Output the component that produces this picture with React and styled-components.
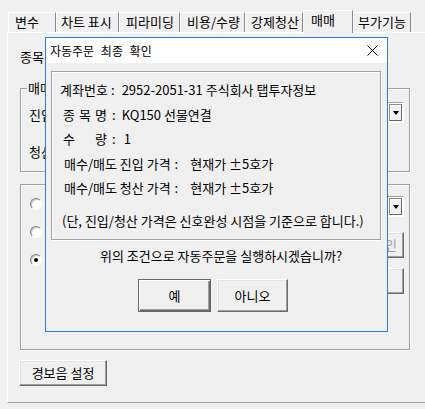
import React from "react"
import styled, { createGlobalStyle, css } from "styled-components"

const GlobalStyle = createGlobalStyle`
    html, body {
        margin: 0;
        padding: 0;
        background: #f0f0f0;
    }
    body {
        font-family: "Noto Sans CJK KR", "Noto Sans", sans-serif;
        font-size: 13px;
        color: #000;
    }
`

const Screen = styled.div`
    position: relative;
    width: 425px;
    height: 409px;
    overflow: hidden;
    padding-top: 10px;
    box-sizing: border-box;
`

const TabRow = styled.div`
    display: flex;
    align-items: flex-end;
    height: 22px;
    padding-left: 8px;
    position: relative;
    z-index: 1;
`

const Tab = styled.div`
    box-sizing: border-box;
    width: ${(p) => p.$w}px;
    height: ${(p) => (p.$active ? 23 : 20)}px;
    margin-bottom: ${(p) => (p.$active ? -1 : 0)}px;
    padding: 1px 0 0 ${(p) => p.$pad}px;
    line-height: 16px;
    background: #f0f0f0;
    border-top: 1px solid #fff;
    border-left: 1px solid #fff;
    border-right: 1px solid #8a8a8a;
    white-space: nowrap;
`

const Panel = styled.div`
    box-sizing: border-box;
    width: 420px;
    height: 371px;
    margin-left: 7px;
    padding-left: 12px;
    border: 1px solid;
    border-color: #fff #a0a0a0 #a0a0a0 #fff;
    display: flex;
    flex-direction: column;
`

const FieldLabel = styled.div`
    line-height: 16px;
    margin-top: 16px;
`

const Group = styled.div`
    position: relative;
    box-sizing: border-box;
    width: 390px;
    height: ${(p) => p.$h}px;
    margin-top: ${(p) => p.$mt}px;
    border: 1px solid #a0a0a0;
    box-shadow: inset 1px 1px #fff, 1px 1px #fff;
    padding: ${(p) => p.$pad};
`

const Legend = styled.span`
    position: absolute;
    top: -9px;
    left: 6px;
    padding: 0 1px;
    background: #f0f0f0;
    line-height: 16px;
`

const Row = styled.div`
    display: flex;
    align-items: center;
    justify-content: space-between;
    margin-top: ${(p) => p.$mt || 0}px;
    line-height: 16px;
`

const RowLabel = styled.span`
    padding-top: ${(p) => p.$shift || 0}px;
`

const Combo = styled.div`
    display: flex;
    box-sizing: border-box;
    width: ${(p) => p.$w}px;
    height: ${(p) => p.$h}px;
    border: 1px solid;
    border-color: #a0a0a0 #fff #fff #a0a0a0;
    background: #fff;
    padding: 1px;
`

const ComboField = styled.div`
    flex: 1;
`

const ComboArrow = styled.div`
    width: 13px;
    box-sizing: border-box;
    border: 1px solid;
    border-color: #8a8a8a #696969 #696969 #8a8a8a;
    box-shadow: inset 1px 1px #fff;
    background: #f0f0f0;
    display: flex;
    align-items: center;
    justify-content: center;
    &::after {
        content: "";
        border-left: 3.5px solid transparent;
        border-right: 3.5px solid transparent;
        border-top: 4px solid #000;
    }
`

const Columns = styled.div`
    display: flex;
    justify-content: space-between;
`

const RadioColumn = styled.div`
    display: flex;
    flex-direction: column;
    gap: 16px;
    padding-top: 13px;
`

const Radio = styled.span`
    position: relative;
    display: block;
    width: 12px;
    height: 12px;
    box-sizing: border-box;
    border-radius: 50%;
    border: 1px solid;
    border-color: #808080 #fff #fff #808080;
    background: #fff;
    box-shadow: inset 1px 1px #c8c8c8;
    ${(p) =>
        p.$checked &&
        css`
            &::after {
                content: "";
                position: absolute;
                left: 3px;
                top: 3px;
                width: 4px;
                height: 4px;
                border-radius: 50%;
                background: #000;
            }
        `}
`

const ControlColumn = styled.div`
    display: flex;
    flex-direction: column;
    align-items: flex-end;
    padding-top: 11px;
`

const Button = styled.button`
    box-sizing: border-box;
    width: ${(p) => p.$w}px;
    height: ${(p) => p.$h}px;
    margin-top: ${(p) => p.$mt || 0}px;
    padding: 0;
    font: inherit;
    line-height: 16px;
    color: ${(p) => (p.disabled ? "#a0a0a0" : "#000")};
    background: #f0f0f0;
    border: 1px solid;
    border-color: #fff #696969 #696969 #fff;
    box-shadow: inset -1px -1px #a0a0a0, inset 1px 1px #e3e3e3;
    ${(p) =>
        p.$default &&
        css`
            border-color: #696969;
            box-shadow: inset 1px 1px #fff, inset -1px -1px #696969, inset -2px -2px #a0a0a0;
        `}
`

const AlarmButton = styled(Button)`
    margin-left: -1px;
    margin-top: 10px;
`

/* confirm dialog floating over the tab page */
const Dialog = styled.div`
    position: absolute;
    left: 45px;
    top: 37px;
    width: 343px;
    height: 295px;
    box-sizing: border-box;
    border: 1px solid #2b7cd3;
    background: #f0f0f0;
    display: flex;
    flex-direction: column;
`

const TitleBar = styled.div`
    height: 25px;
    flex: none;
    background: #fff;
    display: flex;
    align-items: center;
    justify-content: space-between;
    padding: 0 9px 0 4px;
    font-size: 12px;
    line-height: 16px;
    word-spacing: 4px;
`

const DialogBody = styled.div`
    display: flex;
    flex-direction: column;
    padding: 8px 6px 0 5px;
`

const InfoBox = styled.div`
    box-sizing: border-box;
    height: 169px;
    border: 1px solid #a0a0a0;
    box-shadow: inset 1px 1px #fff, 1px 1px #fff;
    padding: 6px 0 0 7px;
`

const InfoRow = styled.div`
    display: flex;
    line-height: 24.5px;
    white-space: pre;
    margin-top: ${(p) => p.$mt || 0}px;
`

const Key = styled.span`
    display: inline-block;
    width: ${(p) => (p.$w ? `${p.$w}px` : "auto")};
    margin-left: ${(p) => p.$ml || 0}px;
    ${(p) =>
        p.$spread &&
        css`
            text-align: justify;
            text-align-last: justify;
        `}
`

const Colon = styled.span`
    margin: 0 ${(p) => p.$after}px 0 ${(p) => p.$before ?? 5}px;
`

const Question = styled.div`
    margin-top: 8px;
    line-height: 16px;
    text-align: center;
    padding-left: 10px;
`

const ButtonRow = styled.div`
    display: flex;
    justify-content: center;
    gap: 6px;
    margin-top: 15px;
    padding-right: 6px;
`

const CloseIcon = () => (
    <svg width="11" height="11" viewBox="0 0 11 11">
        <path d="M0.5 0.5 L10.5 10.5 M10.5 0.5 L0.5 10.5" stroke="#000" strokeWidth="1" />
    </svg>
)

const tabs = [
    { label: "변수", w: 48, pad: 6 },
    { label: "차트 표시", w: 63, pad: 4 },
    { label: "피라미딩", w: 61, pad: 6 },
    { label: "비용/수량", w: 65, pad: 6 },
    { label: "강제청산", w: 58, pad: 5 },
    { label: "매매", w: 50, pad: 7, active: true },
    { label: "부가기능", w: 58, pad: 4 },
]

export default function App() {
    return (
        <Screen>
            <GlobalStyle />
            <TabRow>
                {tabs.map((t) => (
                    <Tab key={t.label} $w={t.w} $pad={t.pad} $active={t.active}>
                        {t.label}
                    </Tab>
                ))}
            </TabRow>
            <Panel>
                <FieldLabel>종목</FieldLabel>
                <Group $h={84} $mt={23} $pad="13px 5px 0 8px">
                    <Legend>매매</Legend>
                    <Row>
                        <RowLabel $shift={5}>진입</RowLabel>
                        <Combo $w={250} $h={21}>
                            <ComboField />
                            <ComboArrow />
                        </Combo>
                    </Row>
                    <Row $mt={21}>
                        <RowLabel>청산</RowLabel>
                    </Row>
                </Group>
                <Group $h={166} $mt={12} $pad="0 5px 0 9px">
                    <Columns>
                        <RadioColumn>
                            <Radio />
                            <Radio />
                            <Radio $checked />
                        </RadioColumn>
                        <ControlColumn>
                            <Combo $w={200} $h={21}>
                                <ComboField />
                                <ComboArrow />
                            </Combo>
                            <Button $w={38} $h={26} $mt={15} disabled>
                                확인
                            </Button>
                            <Button $w={100} $h={26} $mt={10} />
                        </ControlColumn>
                    </Columns>
                </Group>
                <AlarmButton $w={88} $h={26}>
                    경보음 설정
                </AlarmButton>
            </Panel>

            <Dialog>
                <TitleBar>
                    <span>자동주문 최종 확인</span>
                    <CloseIcon />
                </TitleBar>
                <DialogBody>
                    <InfoBox>
                        <InfoRow>
                            <Key $w={46} $ml={1}>계좌번호</Key>
                            <Colon $after={7}>:</Colon>
                            <span>2952-2051-31 주식회사 탭투자정보</span>
                        </InfoRow>
                        <InfoRow>
                            <Key $w={44} $ml={4} $spread>종 목 명</Key>
                            <Colon $after={6}>:</Colon>
                            <span>KQ150 선물연결</span>
                        </InfoRow>
                        <InfoRow>
                            <Key $w={44} $ml={4} $spread>수 량</Key>
                            <Colon $after={8}>:</Colon>
                            <span>1</span>
                        </InfoRow>
                        <InfoRow>
                            <Key $ml={5}>매수/매도 진입 가격</Key>
                            <Colon $before={4} $after={12}>:</Colon>
                            <span>현재가 ±5호가</span>
                        </InfoRow>
                        <InfoRow>
                            <Key $ml={5}>매수/매도 청산 가격</Key>
                            <Colon $before={4} $after={12}>:</Colon>
                            <span>현재가 ±5호가</span>
                        </InfoRow>
                        <InfoRow $mt={8}>
                            <Key $ml={3}>(단, 진입/청산 가격은 신호완성 시점을 기준으로 합니다.)</Key>
                        </InfoRow>
                    </InfoBox>
                    <Question>위의 조건으로 자동주문을 실행하시겠습니까?</Question>
                    <ButtonRow>
                        <Button $w={73} $h={33} $default>
                            예
                        </Button>
                        <Button $w={71} $h={33}>
                            아니오
                        </Button>
                    </ButtonRow>
                </DialogBody>
            </Dialog>
        </Screen>
    )
}
